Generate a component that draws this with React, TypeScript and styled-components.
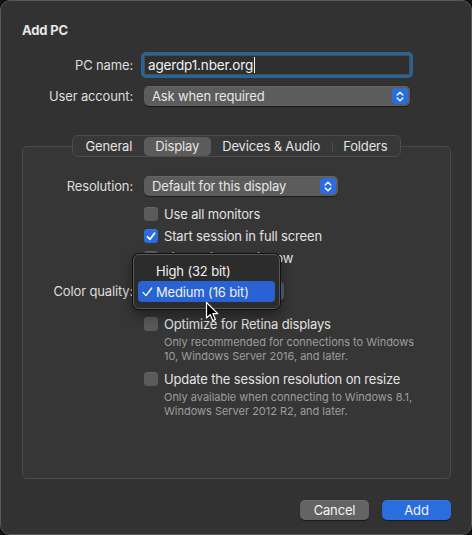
import React from "react";
import styled, { createGlobalStyle } from "styled-components";

const Global = createGlobalStyle`
  html, body { margin: 0; padding: 0; background: #161616; }
  body { font-family: Inter, "Noto Sans", "Liberation Sans", sans-serif; -webkit-font-smoothing: antialiased; }
  * { box-sizing: border-box; }
`;

const Window = styled.div`
  position: relative;
  width: 472px;
  height: 535px;
  background: #323232;
  border: 1px solid #5a5a5a;
  border-radius: 10px;
  box-shadow: 0 0 0 1px #0c0c0c;
  padding: 21px 20px 0 21px;
  display: flex;
  flex-direction: column;
  color: #e2e2e2;
  font-size: 13px;
  letter-spacing: -0.15px;
`;

const Title = styled.div`
  font-weight: 700;
  font-size: 13px;
  line-height: 16px;
  color: #e6e6e6;
`;

const Form = styled.div`
  display: grid;
  grid-template-columns: 111px 1fr;
  column-gap: 11px;
  row-gap: 10px;
  margin-top: 16px;
  padding-right: 41px;
  align-items: center;
`;

const Label = styled.div`
  text-align: right;
  line-height: 16px;
  color: #dedede;
  white-space: nowrap;
`;

const Field = styled.div`
  height: 20px;
  margin: 1px 0;
  background: #2f2f2f;
  border: 1px solid #4c4c4c;
  box-shadow: 0 0 0 3px #2a6398;
  border-radius: 2px;
  display: flex;
  align-items: center;
  padding-left: 3px;
  color: #f2f2f2;
  font-size: 13.5px;
`;

const Caret = styled.span`
  display: inline-block;
  width: 1px;
  height: 16px;
  background: #f0f0f0;
  margin-left: 1px;
`;

const Popup = styled.div<{ $w?: number }>`
  position: relative;
  height: 20px;
  width: ${(p) => (p.$w ? `${p.$w}px` : "auto")};
  background: #5c5c5c;
  border-radius: 5px;
  box-shadow: 0 0.5px 1px rgba(0, 0, 0, 0.5), inset 0 0.5px 0 rgba(255, 255, 255, 0.12);
  display: flex;
  align-items: center;
  justify-content: space-between;
  padding: 0 2px 0 8px;
  color: #e6e6e6;
  white-space: nowrap;
`;

const Stepper = styled.div`
  width: 16px;
  height: 16px;
  border-radius: 4px;
  background: #2b6de0;
  display: flex;
  align-items: center;
  justify-content: center;
`;

const Chevrons = () => (
  <svg width="8" height="11" viewBox="0 0 8 11">
    <path d="M1.2 4 L4 1.3 L6.8 4 M1.2 7 L4 9.7 L6.8 7" fill="none" stroke="#fff" strokeWidth="1.4" strokeLinecap="round" strokeLinejoin="round" />
  </svg>
);

const TabView = styled.div`
  display: flex;
  flex-direction: column;
  align-items: center;
  margin-top: 29px;
`;

const Segmented = styled.div`
  position: relative;
  z-index: 1;
  display: flex;
  align-items: center;
  height: 22px;
  padding: 0 1px;
  background: #383838;
  border: 1px solid #4d4d4d;
  border-radius: 6px;
  margin-bottom: -11px;
`;

const Segment = styled.div<{ $active?: boolean; $sep?: boolean }>`
  position: relative;
  height: 19px;
  display: flex;
  align-items: center;
  justify-content: center;
  padding: 0 11.5px;
  border-radius: 5px;
  background: ${(p) => (p.$active ? "#5b5b5b" : "transparent")};
  color: #e4e4e4;
  white-space: nowrap;
  &::before {
    content: "";
    display: ${(p) => (p.$sep ? "block" : "none")};
    position: absolute;
    left: 0;
    top: 5px;
    width: 1px;
    height: 10px;
    background: #4d4d4d;
  }
`;

const Box = styled.div`
  align-self: stretch;
  height: 333px;
  background: #363636;
  border: 1px solid #4a4a4a;
  border-radius: 5px;
  padding: 29px 0 0 0;
  display: grid;
  grid-template-columns: 110px 1fr;
  column-gap: 11px;
  align-content: start;
`;

const Cell = styled.div<{ $mt?: number; $h?: number }>`
  grid-column: 2;
  margin-top: ${(p) => p.$mt ?? 0}px;
  min-height: ${(p) => p.$h ?? 0}px;
  display: flex;
  align-items: center;
  position: relative;
`;

const RowLabel = styled(Label)<{ $mt?: number; $h?: number }>`
  grid-column: 1;
  margin-top: ${(p) => p.$mt ?? 0}px;
  height: ${(p) => p.$h ?? 20}px;
  display: flex;
  align-items: center;
  justify-content: flex-end;
`;

const Check = styled.div<{ $on?: boolean }>`
  width: 14px;
  height: 14px;
  border-radius: 3.5px;
  flex: none;
  background: ${(p) => (p.$on ? "#2b6de0" : "#5a5a5a")};
  box-shadow: inset 0 0.5px 0 rgba(255, 255, 255, 0.12);
  display: flex;
  align-items: center;
  justify-content: center;
  margin-right: 6px;
`;

const CheckText = styled.span`
  color: #e2e2e2;
  white-space: nowrap;
  line-height: 16px;
`;

const Desc = styled.div`
  grid-column: 2;
  padding-left: 20px;
  font-size: 11px;
  line-height: 14px;
  color: #9d9d9d;
  letter-spacing: -0.02px;
  width: 282px;
`;

const Menu = styled.div`
  position: absolute;
  left: -11px;
  top: -27px;
  width: 147px;
  height: 55px;
  background: #2c2c2c;
  border: 1px solid #575757;
  border-radius: 6px;
  box-shadow: 0 0 0 1px #111, 0 6px 14px rgba(0, 0, 0, 0.45);
  padding: 5px 4px;
  display: flex;
  flex-direction: column;
  z-index: 2;
`;

const MenuItem = styled.div<{ $sel?: boolean }>`
  height: 21px;
  border-radius: 4px;
  display: flex;
  align-items: center;
  padding-left: 4px;
  background: ${(p) => (p.$sel ? "#2962d2" : "transparent")};
  color: #f0f0f0;
  white-space: nowrap;
`;

const Tick = styled.span`
  width: 14px;
  display: inline-flex;
  align-items: center;
`;

const Footer = styled.div`
  display: flex;
  justify-content: flex-end;
  gap: 13px;
  margin-top: 21px;
`;

const Button = styled.div<{ $primary?: boolean }>`
  width: 69px;
  height: 20px;
  border-radius: 5px;
  background: ${(p) => (p.$primary ? "#2a6ddd" : "#646464")};
  box-shadow: 0 0.5px 1px rgba(0, 0, 0, 0.5), inset 0 0.5px 0 rgba(255, 255, 255, 0.15);
  color: #f4f4f4;
  display: flex;
  align-items: center;
  justify-content: center;
`;

const Cursor = styled.svg`
  position: absolute;
  left: 204px;
  top: 300px;
  z-index: 5;
`;

const CheckMark = () => (
  <svg width="10" height="9" viewBox="0 0 10 9">
    <path d="M1.5 4.8 L4 7.3 L8.6 1.3" fill="none" stroke="#fff" strokeWidth="1.8" strokeLinecap="round" strokeLinejoin="round" />
  </svg>
);

const checks: { text: string; on?: boolean }[] = [
  { text: "Use all monitors" },
  { text: "Start session in full screen", on: true },
  { text: "Fit session to window" },
];

export default function App() {
  return (
    <>
      <Global />
      <Window>
        <Title>Add PC</Title>
        <Form>
          <Label>PC name:</Label>
          <Field>
            agerdp1.nber.org
            <Caret />
          </Field>
          <Label>User account:</Label>
          <Popup>
            Ask when required
            <Stepper>
              <Chevrons />
            </Stepper>
          </Popup>
        </Form>

        <TabView>
          <Segmented>
            <Segment>General</Segment>
            <Segment $active>Display</Segment>
            <Segment>Devices &amp; Audio</Segment>
            <Segment $sep>Folders</Segment>
          </Segmented>
          <Box>
            <RowLabel>Resolution:</RowLabel>
            <Cell>
              <Popup $w={194}>
                Default for this display
                <Stepper>
                  <Chevrons />
                </Stepper>
              </Popup>
            </Cell>
            {checks.map((c, i) => (
              <Cell key={c.text} $h={22} $mt={i === 0 ? 7 : 0}>
                <Check $on={c.on}>{c.on && <CheckMark />}</Check>
                <CheckText>{c.text}</CheckText>
              </Cell>
            ))}
            <RowLabel $mt={12}>Color quality:</RowLabel>
            <Cell $mt={12}>
              <Popup $w={140}>
                Medium (16 bit)
                <Stepper>
                  <Chevrons />
                </Stepper>
              </Popup>
              <Menu>
                <MenuItem>
                  <Tick />
                  High (32 bit)
                </MenuItem>
                <MenuItem $sel>
                  <Tick>
                    <svg width="11" height="10" viewBox="0 0 11 10">
                      <path d="M1 5.4 L4 8.6 L9.8 1" fill="none" stroke="#fff" strokeWidth="1.3" strokeLinecap="round" strokeLinejoin="round" />
                    </svg>
                  </Tick>
                  Medium (16 bit)
                </MenuItem>
              </Menu>
            </Cell>
            <Cell $mt={12} $h={22}>
              <Check />
              <CheckText>Optimize for Retina displays</CheckText>
            </Cell>
            <Desc>Only recommended for connections to Windows 10, Windows Server 2016, and later.</Desc>
            <Cell $mt={5} $h={22}>
              <Check />
              <CheckText>Update the session resolution on resize</CheckText>
            </Cell>
            <Desc>Only available when connecting to Windows 8.1, Windows Server 2012 R2, and later.</Desc>
          </Box>
        </TabView>

        <Footer>
          <Button>Cancel</Button>
          <Button $primary>Add</Button>
        </Footer>

        <Cursor width="16" height="22" viewBox="0 0 16 22">
          <path d="M1.5 1.5 L1.5 17 L5.2 13.6 L7.8 19.6 L10.4 18.5 L7.9 12.6 L12.8 12.6 Z" fill="#000" stroke="#fff" strokeWidth="1.2" strokeLinejoin="round" />
        </Cursor>
      </Window>
    </>
  );
}
